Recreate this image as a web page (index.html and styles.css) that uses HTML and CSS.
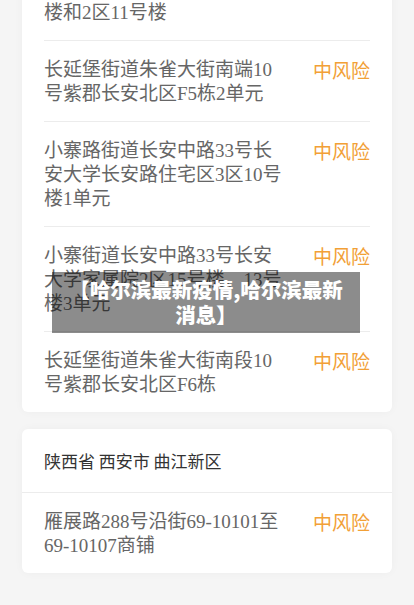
FILE: index.html
```html
<!DOCTYPE html>
<html lang="zh-CN">
<head>
<meta charset="utf-8">
<title>哈尔滨最新疫情</title>
<link rel="stylesheet" href="styles.css">
</head>
<body>
<div class="page">
  <section class="card card-first">
    <div class="row">
      <div class="addr">长延堡街道朱雀大街南端3号楼和2区11号楼</div>
      <div class="risk">中风险</div>
    </div>
    <div class="row">
      <div class="addr">长延堡街道朱雀大街南端10号紫郡长安北区F5栋2单元</div>
      <div class="risk">中风险</div>
    </div>
    <div class="row">
      <div class="addr">小寨路街道长安中路33号长安大学长安路住宅区3区10号楼1单元</div>
      <div class="risk">中风险</div>
    </div>
    <div class="row">
      <div class="addr">小寨街道长安中路33号长安大学家属院2区15号楼、13号楼3单元</div>
      <div class="risk">中风险</div>
    </div>
    <div class="row">
      <div class="addr">长延堡街道朱雀大街南段10号紫郡长安北区F6栋</div>
      <div class="risk">中风险</div>
    </div>
  </section>
  <section class="card">
    <div class="card-head">陕西省 西安市 曲江新区</div>
    <div class="card-body">
      <div class="row">
        <div class="addr">雁展路288号沿街69-10101至69-10107商铺</div>
        <div class="risk">中风险</div>
      </div>
    </div>
  </section>
</div>
<div class="title-overlay">【哈尔滨最新疫情,哈尔滨最新消息】</div>
</body>
</html>
```
FILE: styles.css
```css
html, body {
  margin: 0;
  padding: 0;
}
body {
  background: #f5f5f5;
  font-family: "Liberation Serif", "Noto Sans CJK SC", serif;
  overflow: hidden;
  height: 605px;
}
.page {
  padding: 0 22px;
}
.card {
  background: #fff;
  border-radius: 6px;
  box-shadow: 0 0 10px rgba(0, 0, 0, 0.035);
  margin-top: 17px;
}
.card-first {
  margin-top: -40px;
  padding: 0 22px;
}
.card-body {
  padding: 0 22px;
}
.row {
  display: flex;
  justify-content: space-between;
  align-items: flex-start;
  padding: 17px 0 15px;
  border-bottom: 1px solid #ececec;
}
.row:last-child {
  border-bottom: none;
}
.addr {
  width: 240px;
  font-size: 19px;
  line-height: 24px;
  color: #666;
}
.risk {
  font-family: "Noto Sans CJK SC", sans-serif;
  font-size: 19px;
  line-height: 24px;
  color: #f2a036;
  white-space: nowrap;
}
.card-head {
  padding: 20px 22px 19px;
  font-family: "Noto Sans CJK SC", sans-serif;
  font-size: 17px;
  line-height: 24px;
  color: #333;
  border-bottom: 1px solid #ececec;
}
.title-overlay {
  position: absolute;
  top: 272px;
  left: 52px;
  width: 308px;
  height: 61px;
  box-sizing: border-box;
  padding: 5px 16px;
  background: rgba(0, 0, 0, 0.45);
  color: #fff;
  font-family: "Noto Sans CJK SC", sans-serif;
  font-weight: 900;
  font-size: 20.5px;
  line-height: 25px;
  text-align: center;
}
```
